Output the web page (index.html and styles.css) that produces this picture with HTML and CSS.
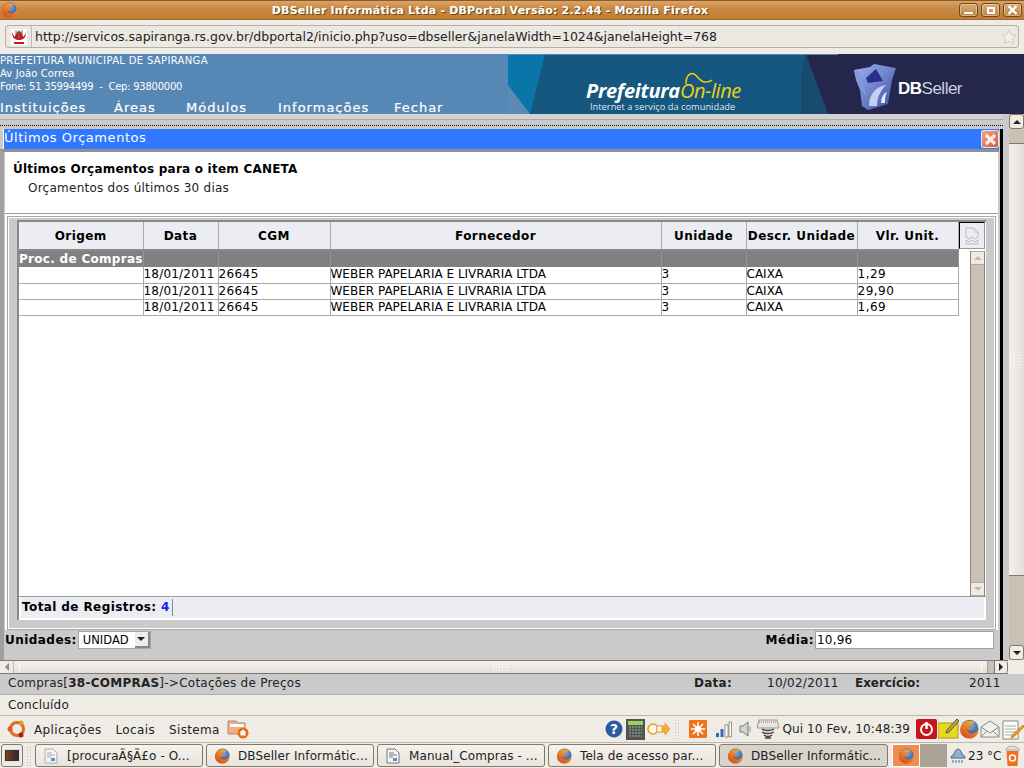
FILE: index.html
```html
<!DOCTYPE html>
<html lang="pt-BR">

<head>
    <meta charset="UTF-8">
    <title>DBSeller Informática Ltda - DBPortal Versão: 2.2.44 - Mozilla Firefox</title>
    <link rel="stylesheet" href="styles.css">
</head>

<body>
    <!-- firefox icon, used in several places -->
    <svg class="defs" width="0" height="0">
        <defs>
            <linearGradient id="fxg" x1="0.8" y1="0" x2="0.2" y2="1">
                <stop offset="0" stop-color="#f8b030"/>
                <stop offset="1" stop-color="#d8481c"/>
            </linearGradient>
            <radialGradient id="fxb" cx="0.6" cy="0.35" r="0.7">
                <stop offset="0" stop-color="#7aa4dc"/>
                <stop offset="1" stop-color="#1c3f80"/>
            </radialGradient>
            <symbol id="fx" viewBox="0 0 16 16">
                <circle cx="8.500" cy="7.500" r="7" fill="url(#fxb)"/>
                <path d="M13.500 3.500C11 1 6.500.5 3.500 3 .5 5.500 0 10 2.500 13c2.500 3 7.500 3.500 10.500 1 2-1.500 3-4 2.500-6.500-.5 2-2.500 4-5 4-3 0-4.500-2-4-3.500 1 1 3 1 3.500 0-1-.5-2-1-2-2 .5-1 2.500-1.500 3.500-2-1-.5.5-1 2-.5z" fill="url(#fxg)"/>
            </symbol>
        </defs>
    </svg>

    <div class="titlebar">
        <svg class="fx" width="16" height="16"><use href="#fx"/></svg>
        <div class="title-text">DBSeller Informática Ltda - DBPortal Versão: 2.2.44 - Mozilla Firefox</div>
        <div class="wm-btns">
            <div class="wm-btn"><i class="i-min"></i></div>
            <div class="wm-btn"><i class="i-max"></i></div>
            <div class="wm-btn">
                <svg width="11" height="10" viewBox="0 0 11 10"><path d="M1.500 1l8 8M9.500 1l-8 8" stroke="#fff" stroke-width="2.400"/></svg>
            </div>
        </div>
    </div>

    <div class="urlbar">
        <div class="urlbox">
            <div class="favicon">
                <svg width="16" height="16" viewBox="0 0 16 16"><rect width="16" height="16" fill="#fff"/><path d="M1 3c0 6 3 8 7 8s7-2 7-8c-1 3-2 4-3 5 0-3-2-5-4-6.500C6 3 4 5 4 8 3 7 2 6 1 3z" fill="#c8141c"/><path d="M3 13h10v2H3z" fill="#c8141c"/><path d="M8 2v8M5 1v5M11 1v5" stroke="#4a8a5a"/></svg>
            </div>
            <div class="url">http://servicos.sapiranga.rs.gov.br/dbportal2/inicio.php?uso=dbseller&amp;janelaWidth=1024&amp;janelaHeight=768</div>
            <svg class="star" width="16" height="16" viewBox="0 0 16 16"><path d="M8 1l2.200 4.600 5 .6-3.700 3.400 1 5L8 12.100l-4.500 2.500 1-5L.8 6.200l5-.6z" fill="#f2f0ec" stroke="#cfcbc4"/></svg>
        </div>
    </div>

    <div class="banner">
        <div class="inst">
            <div class="inst-lines">
                <div class="il1">PREFEITURA MUNICIPAL DE SAPIRANGA</div>
                <div>Av João Correa</div>
                <div class="il3">Fone: 51 35994499 &nbsp;-&nbsp; Cep: 93800000</div>
            </div>
            <div class="menu">
                <span class="m1">Instituições</span>
                <span class="m2">Áreas</span>
                <span class="m3">Módulos</span>
                <span class="m4">Informações</span>
                <span>Fechar</span>
            </div>
        </div>
        <div class="promo">
            <svg class="promo-bg" width="516" height="60" viewBox="0 0 516 60">
                <rect width="516" height="60" fill="#15577f"/>
                <path d="M0 0h37L22 60H0z" fill="#0a75a8"/>
                <path d="M0 31l22 29H0z" fill="#5b8ab4"/>
                <path d="M293 18l5-18 22 60h-27z" fill="#1b4a70"/>
                <path d="M298 0h218v60H320z" fill="#24264b"/>
                <path d="M0 0h330v1H0z" fill="#5787b4"/>
            </svg>
            <div class="pref"><b>Prefeitura</b><span>On-line</span></div>
            <svg class="pref-swoosh" width="32" height="14" viewBox="0 0 32 14"><path d="M2 12C2 4 6 0 10 2s6 8 11 8c3 0 6-1 7-2" fill="none" stroke="#f0d010" stroke-width="1.500"/></svg>
            <div class="pref-sub">Internet a serviço da comunidade</div>
            <svg class="db-logo" width="46" height="46" viewBox="0 0 46 46">
                <defs>
                    <linearGradient id="dbg" x1="0" y1="0" x2="1" y2="1">
                        <stop offset="0" stop-color="#a0b4ec"/>
                        <stop offset="1" stop-color="#3a50a8"/>
                    </linearGradient>
                </defs>
                <path d="M2 6l16-3 4-3 22 4-4 12-4 24-20 6-6-4-2-16-4-10z" fill="url(#dbg)"/>
                <path d="M14 14l10-9 7 12-15 2z" fill="#26308c"/>
                <path d="M17 42c0-11 6-19 17-21-6 6-9 13-9 21z" fill="#c4d0f0"/>
                <path d="M29 39c0-5 2-9 6-11-2 4-2 7-2 11z" fill="#e4eaf8"/>
                <path d="M2 6l7 4 5 22-6-8z" fill="#8098dc"/>
            </svg>
            <div class="db-text"><b>DB</b>Seller</div>
        </div>
    </div>

    <div class="viewport">
        <div class="viewport-main">
            <div class="desk">
                <div class="desk-strip"></div>
                <div class="window">
                    <div class="win-title">
                        <span>Últimos Orçamentos</span>
                        <div class="win-close">
                            <svg width="13" height="13" viewBox="0 0 13 13"><path d="M2 2l9 9M11 2l-9 9" stroke="#fff" stroke-width="3.200" opacity=".85"/></svg>
                        </div>
                    </div>
                    <div class="win-body">
                        <div class="head-box">
                            <div class="head-title">Últimos Orçamentos para o item CANETA</div>
                            <div class="head-sub">Orçamentos dos últimos 30 dias</div>
                        </div>
                        <div class="frame-wrap">
                            <div class="frame">
                                <div class="grid-box">
                                    <div class="grid-wrap">
                                        <div class="grid-left">
                                            <table class="grid">
                                                <colgroup>
                                                    <col class="c1"><col class="c2"><col class="c3"><col class="c4"><col class="c5"><col class="c6"><col class="c7">
                                                </colgroup>
                                                <tr class="hd">
                                                    <th>Origem</th><th>Data</th><th>CGM</th><th>Fornecedor</th><th>Unidade</th><th>Descr. Unidade</th><th>Vlr. Unit.</th>
                                                </tr>
                                                <tr class="grp">
                                                    <td>Proc. de Compras</td><td></td><td></td><td></td><td></td><td></td><td></td>
                                                </tr>
                                                <tr>
                                                    <td></td><td>18/01/2011</td><td>26645</td><td>WEBER PAPELARIA E LIVRARIA LTDA</td><td>3</td><td>CAIXA</td><td>1,29</td>
                                                </tr>
                                                <tr>
                                                    <td></td><td>18/01/2011</td><td>26645</td><td>WEBER PAPELARIA E LIVRARIA LTDA</td><td>3</td><td>CAIXA</td><td>29,90</td>
                                                </tr>
                                                <tr>
                                                    <td></td><td>18/01/2011</td><td>26645</td><td>WEBER PAPELARIA E LIVRARIA LTDA</td><td>3</td><td>CAIXA</td><td>1,69</td>
                                                </tr>
                                            </table>
                                        </div>
                                        <div class="grid-right">
                                            <div class="print-btn">
                                                <svg width="16" height="18" viewBox="0 0 16 18"><path d="M2 1h8l4 4v5l-3 2-3-2-3 2-3-2z" fill="none" stroke="#bbb"/><path d="M2 13l3 2 3-2 3 2 3-2v4H2z" fill="none" stroke="#bbb"/><path d="M10 1v4h4" fill="none" stroke="#ccc"/></svg>
                                            </div>
                                            <div class="grid-scroll">
                                                <div class="sb-btn sb-up"><i class="arr-up light"></i></div>
                                                <div class="sb-track"></div>
                                                <div class="sb-btn sb-down"><i class="arr-dn light"></i></div>
                                            </div>
                                        </div>
                                    </div>
                                    <div class="total">Total de Registros: <span class="num">4</span><span class="total-sep"></span></div>
                                </div>
                            </div>
                        </div>
                        <div class="bottom-row">
                            <div class="unid">
                                <label>Unidades:</label>
                                <div class="select"><span>UNIDAD</span><div class="select-btn"><i class="arr-dn"></i></div></div>
                            </div>
                            <div class="media">
                                <label>Média:</label>
                                <div class="media-input">10,96</div>
                            </div>
                        </div>
                    </div>
                </div>
            </div>
            <div class="hscroll">
                <div class="hs-btn"><i class="arr-l"></i></div>
                <div class="hs-track"><div class="hs-thumb"><div class="grip"></div></div></div>
                <div class="hs-end"></div>
                <div class="hs-btn"><i class="arr-r"></i></div>
            </div>
        </div>
        <div class="vscroll">
            <div class="vs-btn"><i class="arr-up"></i></div>
            <div class="vs-space"></div>
            <div class="vs-thumb"><div class="grip grip-v"></div></div>
            <div class="vs-fill"></div>
            <div class="vs-btn"><i class="arr-dn"></i></div>
        </div>
    </div>

    <div class="statusdb">
        <span class="st-left">Compras[<b>38-COMPRAS</b>]-&gt;Cotações de Preços</span>
        <b class="st-data">Data:</b>
        <span class="st-date">10/02/2011</span>
        <b class="st-ex">Exercício:</b>
        <span class="st-year">2011</span>
    </div>
    <div class="statusff">Concluído</div>

    <div class="panel-top">
        <svg width="20" height="20" viewBox="0 0 20 20" class="ubu"><circle cx="10" cy="10" r="6.500" fill="none" stroke="#dd6a20" stroke-width="3"/><circle cx="3" cy="10" r="2.500" fill="#e05a20"/><circle cx="14" cy="4" r="2.500" fill="#e89020"/><circle cx="14" cy="16" r="2.500" fill="#b02010"/></svg>
        <span class="pm">Aplicações</span>
        <span class="pm">Locais</span>
        <span class="pm pm-last">Sistema</span>
        <svg width="22" height="20" viewBox="0 0 22 20"><path d="M1 2h8l2 2h7v11H1z" fill="#eeb080" stroke="#a88"/><rect x="3" y="5" width="14" height="3" fill="#fff"/><circle cx="16" cy="14" r="5.500" fill="#ee6a10"/><path d="M16 10.500l3.500 3h-1v3h-5v-3h-1z" fill="#fff"/></svg>
        <div class="panel-fill"></div>
        <svg width="18" height="18" viewBox="0 0 18 18"><circle cx="9" cy="9" r="8.500" fill="#2a5a9c"/><text x="9" y="14" text-anchor="middle" class="qm">?</text></svg>
        <svg class="ic-calc" width="19" height="21" viewBox="0 0 19 21"><rect width="19" height="21" fill="#50554f"/><rect x="2" y="2" width="15" height="4" fill="#9cd060"/><path d="M3 8h13M3 11h13M3 14h13M3 17h13" stroke="#aaa" stroke-dasharray="2 1"/></svg>
        <svg class="ic-keys" width="24" height="16" viewBox="0 0 24 16"><circle cx="6" cy="8" r="5" fill="#fff6e0" stroke="#e89a30" stroke-width="1.500"/><circle cx="13" cy="8" r="3.500" fill="#fff6e0" stroke="#e89a30"/><path d="M15 5h3V2l5 6-5 6v-3h-3z" fill="#f4b030" stroke="#c87a10" stroke-width=".5"/></svg>
        <div class="dots dots-t"></div>
        <svg class="ic-star" width="18" height="18" viewBox="0 0 18 18"><rect width="18" height="18" rx="1" fill="#f0741c"/><path d="M9 2v14M2 9h14M4 4l10 10M14 4L4 14" stroke="#fff" stroke-width="1.500"/><circle cx="9" cy="9" r="3" fill="#fff"/></svg>
        <svg class="ic-net" width="17" height="17" viewBox="0 0 17 17"><path d="M1 12h3v4H1z" fill="#3a6aac"/><path d="M5.500 8h3v8h-3z" fill="#3a6aac"/><path d="M10 4h3v12h-3z" fill="#fff" stroke="#333" stroke-width=".5"/><path d="M14 1h2.500v15H14z" fill="#fff" stroke="#333" stroke-width=".5"/></svg>
        <svg class="ic-vol" width="13" height="16" viewBox="0 0 13 16"><path d="M1 5h3l5-4v14l-5-4H1z" fill="#d4d4d0" stroke="#777"/><path d="M11 5v6" stroke="#999"/></svg>
        <svg class="ic-spring" width="24" height="22" viewBox="0 0 24 22"><path d="M3 2h18l2 8H1z" fill="#e8e6e2" stroke="#999"/><path d="M3 4h18" stroke="#d06060" stroke-dasharray="1 1"/><path d="M6 11c3 2 9 2 12 0M6 14c3 2 9 2 12 0M8 17c2 2 6 2 8 0M9 20h6" fill="none" stroke="#444" stroke-width="1.500"/></svg>
        <span class="clock">Qui 10 Fev, 10:48:39</span>
        <svg class="ic-power" width="21" height="20" viewBox="0 0 21 20"><rect width="21" height="20" rx="2" fill="#c8141c"/><circle cx="10.500" cy="10.500" r="5.500" fill="none" stroke="#fff" stroke-width="2"/><path d="M10.500 3v7" stroke="#fff" stroke-width="2.500"/></svg>
        <svg class="ic-note" width="21" height="20" viewBox="0 0 21 20"><rect y="4" width="20" height="15" fill="#e8d820" stroke="#a89810"/><path d="M19 0L9 11l-1 3 3-1L21 2z" fill="#c8a050" stroke="#554"/></svg>
        <svg class="ic-fx2" width="20" height="20"><use href="#fx"/></svg>
        <svg class="ic-mail" width="20" height="18" viewBox="0 0 20 18"><path d="M1 7l9-6 9 6v10H1z" fill="#f0f0ec" stroke="#888"/><path d="M1 7l9 6 9-6M1 17l6-6M19 17l-6-6" fill="none" stroke="#888"/></svg>
        <svg class="ic-pad" width="22" height="21" viewBox="0 0 22 21"><rect x="1" y="2" width="15" height="18" fill="#fcfcf8" stroke="#888"/><path d="M3 7h11M3 10h11M3 13h11M3 16h8" stroke="#aaa"/><path d="M21 6L10 16l-1 3 3-1L22 8z" fill="#f0a020" stroke="#a05010" stroke-width=".5"/></svg>
    </div>

    <div class="panel-bot">
        <div class="show-desk"><i></i></div>
        <div class="dots dots-b"></div>
        <div class="tasks">
            <div class="task"><svg width="16" height="16" viewBox="0 0 16 16"><path d="M2 1h8l4 4v10H2z" fill="#f4f4f0" stroke="#aab"/><path d="M4 5h5M4 7h8M4 9h4" stroke="#aab"/><rect x="8" y="10" width="4" height="3" fill="#6a8ac4"/></svg><span>[procuraÃ§Ã£o - O...</span></div>
            <div class="task"><svg width="16" height="16"><use href="#fx"/></svg><span>DBSeller Informátic...</span></div>
            <div class="task"><svg width="16" height="16" viewBox="0 0 16 16"><path d="M2 1h8l4 4v10H2z" fill="#f4f4f0" stroke="#778"/><path d="M4 5h5M4 7h8M4 9h4" stroke="#778"/><rect x="8" y="10" width="4" height="3" fill="#6a8ac4"/></svg><span>Manual_Compras - ...</span></div>
            <div class="task"><svg width="16" height="16"><use href="#fx"/></svg><span>Tela de acesso par...</span></div>
            <div class="task active"><svg width="16" height="16"><use href="#fx"/></svg><span>DBSeller Informátic...</span></div>
        </div>
        <div class="pager">
            <div class="pager-a"><svg width="16" height="16"><use href="#fx"/></svg></div>
            <div class="pager-b"></div>
        </div>
        <svg class="ic-rain" width="16" height="17" viewBox="0 0 16 17"><path d="M1 11c0-3 2-3 3-3 0-3 2-6 4-6s4 3 4 6c1 0 3 0 3 3z" fill="#9ab0c8" stroke="#468"/><path d="M3 13v3M6 13v3M9 13v3M12 13v3" stroke="#2a70c0"/></svg>
        <span class="temp">23 °C</span>
        <svg class="ic-trash" width="17" height="22" viewBox="0 0 16 22"><path d="M2 6h12l-1 15H3z" fill="#f07020"/><path d="M1 5c2-5 12-5 14 0z" fill="#e4e2de" stroke="#aaa"/><circle cx="8" cy="13" r="3" fill="none" stroke="#fff" stroke-width="1.500"/></svg>
    </div>
</body>

</html>
```

FILE: styles.css
```css
* {
    margin: 0;
    padding: 0;
    box-sizing: border-box;
}

html,
body {
    width: 1024px;
    height: 768px;
    overflow: hidden;
}

body {
    font-family: "DejaVu Sans", sans-serif;
    font-size: 12px;
    color: #000;
    background-color: #efebe5;
    display: flex;
    flex-direction: column;
}

.defs {
    position: absolute;
}

/* firefox window */
.titlebar {
    height: 20px;
    flex: none;
    display: flex;
    align-items: center;
    padding: 0 2px 0 1px;
    background: linear-gradient(#dca468, #c98a44 40%, #bf7c34);
    border-top: 1px solid #8a5a28;
    border-bottom: 1px solid #a06a30;
}

.fx {
    flex: none;
}

.title-text {
    flex: 1;
    text-align: center;
    color: #fff;
    font-weight: bold;
    font-size: 11px;
    letter-spacing: 0.18px;
    padding-left: 4px;
    text-shadow: 1px 1px 0 #6b4a20;
}

.wm-btns {
    display: flex;
    gap: 3px;
}

.wm-btn {
    width: 19px;
    height: 14px;
    border: 1px solid #6b4a22;
    border-radius: 3px;
    background: linear-gradient(#dba873, #c08440);
    box-shadow: inset 0 0 0 1px rgba(255, 255, 255, 0.35);
    display: flex;
    align-items: center;
    justify-content: center;
}

.i-min {
    width: 9px;
    height: 2px;
    margin-top: 6px;
    background-color: #fff;
}

.i-max {
    width: 8px;
    height: 7px;
    border: 2px solid #fff;
}

.urlbar {
    height: 34px;
    flex: none;
    padding: 5px 5px 0 5px;
    background-color: #efebe5;
}

.urlbox {
    height: 23px;
    border: 1px solid #b8afa2;
    border-radius: 3px;
    background-color: #ece9e3;
    display: flex;
    align-items: center;
    padding-right: 1px;
}

.favicon {
    width: 26px;
    height: 100%;
    flex: none;
    border-right: 1px solid #c4bdb2;
    display: flex;
    align-items: center;
    justify-content: center;
}

.url {
    flex: 1;
    padding-left: 3px;
    font-size: 12.5px;
    color: #222;
    white-space: nowrap;
}

.star {
    flex: none;
}

/* banner */
.banner {
    height: 60px;
    flex: none;
    display: flex;
    background-color: #5787b4;
    color: #fff;
}

.inst {
    width: 508px;
    flex: none;
}

.inst-lines {
    font-size: 10px;
    line-height: 13px;
    height: 41px;
    letter-spacing: 0.1px;
    white-space: nowrap;
}

.il1 {
    letter-spacing: 0.34px;
}

.il3 {
    letter-spacing: -0.24px;
}

.menu {
    display: flex;
    font-size: 13px;
    letter-spacing: 1px;
    white-space: nowrap;
    line-height: 13px;
    padding-top: 6px;
    -webkit-text-stroke: 0.2px #fff;
}

.m1 {
    width: 114px;
}

.m2 {
    width: 72px;
}

.m3 {
    width: 92px;
}

.m4 {
    width: 116px;
}

.promo {
    position: relative;
    width: 516px;
    flex: none;
    overflow: hidden;
}

.promo-bg {
    display: block;
}

.pref {
    position: absolute;
    left: 78px;
    top: 27px;
    font-family: "Open Sans", sans-serif;
    font-size: 20px;
    line-height: 20px;
    font-style: italic;
    white-space: nowrap;
    letter-spacing: -0.3px;
}

.pref b {
    color: #fff;
}

.pref span {
    color: #f0d010;
    font-weight: 400;
    letter-spacing: -0.4px;
}

.pref-swoosh {
    position: absolute;
    left: 176px;
    top: 18px;
}

.pref-sub {
    position: absolute;
    left: 82px;
    top: 47px;
    font-family: "Open Sans", sans-serif;
    font-size: 9.3px;
    line-height: 12px;
    color: #dde6ee;
    white-space: nowrap;
}

.db-logo {
    position: absolute;
    left: 344px;
    top: 10px;
}

.db-text {
    position: absolute;
    left: 390px;
    top: 25px;
    font-family: "Liberation Sans", sans-serif;
    font-size: 17px;
    line-height: 20px;
    color: #c9d2e0;
    letter-spacing: -0.5px;
}

.db-text b {
    color: #fff;
}

/* page viewport */
.viewport {
    height: 560px;
    flex: none;
    display: flex;
    align-items: flex-start;
}

.viewport-main {
    width: 1009px;
    flex: none;
    display: flex;
    flex-direction: column;
}

.desk {
    height: 546px;
    flex: none;
    background-color: #cacaca;
    display: flex;
    flex-direction: column;
}

.desk-strip {
    height: 12px;
    flex: none;
    margin-right: 6px;
    border-bottom: 1px dotted #000;
    background: linear-gradient(#d2d2d2 0, #d2d2d2 5px, #a8a8a8 5px, #a8a8a8 6px, #cacaca 6px);
}

.window {
    flex: 1;
    display: flex;
    flex-direction: column;
    margin: 3px 6px 0 0;
    padding-right: 1px;
    border-right: 3px solid #000;
}

.win-title {
    height: 20px;
    flex: none;
    margin-left: 3px;
    background-color: #2f78ff;
    color: #fff;
    font-size: 13px;
    line-height: 18px;
    letter-spacing: 0.55px;
    display: flex;
    justify-content: space-between;
    border-left: 1px solid #fff;
}

.win-close {
    width: 18px;
    height: 18px;
    margin-top: 1px;
    border: 1px solid #dfe8f4;
    border-radius: 2px;
    background: linear-gradient(135deg, #f0a888, #d05c3c);
    display: flex;
    align-items: center;
    justify-content: center;
}

.win-body {
    flex: 1;
    display: flex;
    flex-direction: column;
    border-top: 3px solid #909090;
    border-left: 4px solid #a0a0a0;
}

.head-box {
    height: 62px;
    flex: none;
    background-color: #fff;
    padding: 9px 0 0 8px;
    margin: 0 1px;
    border-bottom: 1px solid #999;
}

.head-title {
    font-weight: bold;
    font-size: 12px;
    line-height: 16px;
    letter-spacing: 0.22px;
}

.head-sub {
    font-size: 12px;
    line-height: 19px;
    margin-top: 2px;
    padding-left: 15px;
    color: #222;
    letter-spacing: 0.25px;
}

.frame-wrap {
    height: 416px;
    flex: none;
    margin: 0 1px;
    padding: 2px 2px 0;
    background-color: #fff;
}

.frame {
    height: 414px;
    border: 1px solid #a8a8a8;
    background-color: #cacaca;
    padding: 3px 9px 9px;
    box-shadow: inset 0 0 0 1px #fff;
}

.grid-box {
    height: 400px;
    display: flex;
    flex-direction: column;
    background-color: #fff;
    border-top: 2px solid #8a8a8a;
    border-left: 2px solid #8a8a8a;
}

.grid-wrap {
    flex: 1;
    display: flex;
    min-height: 0;
    border-bottom: 1px solid #999;
    margin-left: 0;
}

.grid-left {
    width: 939px;
    flex: none;
}

.grid {
    width: 939px;
    table-layout: fixed;
    border-collapse: collapse;
    font-size: 12px;
}

.c1 { width: 124px; }
.c2 { width: 75px; }
.c3 { width: 112px; }
.c4 { width: 331px; }
.c5 { width: 85px; }
.c6 { width: 111px; }
.c7 { width: 101px; }

.grid th,
.grid td {
    border-right: 1px solid #aaa;
    white-space: nowrap;
    overflow: hidden;
}

.grid td {
    height: 16px;
    padding: 0;
    line-height: 15px;
    border-bottom: 1px solid #aaa;
}

.grid td:nth-child(2) {
    letter-spacing: 0.2px;
}

.grid td:nth-child(3) {
    letter-spacing: 0.4px;
}

.grid td:nth-child(7) {
    letter-spacing: 0.5px;
}

.hd th {
    height: 28px;
    padding-top: 1px;
    background-color: #ebedf2;
    border-bottom: 2px solid #8a8a8a;
    letter-spacing: 0.45px;
}

.grp td {
    height: 17px;
    background-color: #808080;
    color: #fff;
    font-weight: bold;
    border-bottom: 0;
    letter-spacing: 0.3px;
    border-right-color: #969696;
}

.grid-right {
    flex: 1;
    display: flex;
    flex-direction: column;
    min-width: 0;
}

.print-btn {
    width: 26px;
    height: 27px;
    flex: none;
    margin-left: 1px;
    background-color: #ebedf2;
    border: 1px solid #000;
    border-right-color: #999;
    border-bottom-color: #999;
    display: flex;
    align-items: center;
    justify-content: center;
}

.grid-scroll {
    flex: 1;
    width: 15px;
    margin: 2px 0 0 12px;
    display: flex;
    flex-direction: column;
    background-color: #c9c1b6;
    border-left: 1px solid #8f8474;
    border-right: 1px solid #8f8474;
}

.sb-btn {
    height: 14px;
    flex: none;
    background-color: #efebe5;
    border-top: 1px solid #b5aa9c;
    border-bottom: 1px solid #b5aa9c;
    display: flex;
    align-items: center;
    justify-content: center;
}

.sb-track {
    flex: 1;
}

.arr-up,
.arr-dn,
.arr-l,
.arr-r {
    display: block;
    width: 0;
    height: 0;
    border-style: solid;
    border-color: transparent;
}

.arr-up {
    border-width: 0 4px 4px;
    border-bottom-color: #222;
}

.arr-dn {
    border-width: 4px 4px 0;
    border-top-color: #222;
}

.arr-l {
    border-width: 4px 4px 4px 0;
    border-right-color: #888;
}

.arr-r {
    border-width: 4px 0 4px 4px;
    border-left-color: #222;
}

.arr-up.light {
    border-bottom-color: #bbb;
}

.arr-dn.light {
    border-top-color: #bbb;
}

.total {
    height: 21px;
    flex: none;
    margin: 0 2px 2px;
    background-color: #ebedf2;
    font-weight: bold;
    font-size: 12px;
    line-height: 21px;
    padding-left: 1px;
    letter-spacing: 0.4px;
    display: flex;
    white-space: pre;
}

.num {
    color: #1a1aee;
}

.total-sep {
    width: 1px;
    height: 17px;
    margin: 2px 0 0 2px;
    background-color: #888;
}

.bottom-row {
    flex: 1;
    display: flex;
    justify-content: space-between;
    align-items: flex-start;
    padding: 1px 5px 0 1px;
}

.bottom-row label {
    font-weight: bold;
    font-size: 12px;
    letter-spacing: 0.45px;
}

.unid,
.media {
    display: flex;
    align-items: center;
}

.select {
    width: 73px;
    height: 18px;
    margin-left: 1px;
    background-color: #fff;
    border: 1px solid #a8a8a8;
    font-size: 11.5px;
    line-height: 16px;
    padding-left: 4px;
    display: flex;
    justify-content: space-between;
}

.select-btn {
    width: 15px;
    flex: none;
    background-color: #efebe5;
    border-right: 2px solid #888;
    border-bottom: 2px solid #888;
    display: flex;
    align-items: center;
    justify-content: center;
}

.media-input {
    width: 179px;
    height: 18px;
    margin-left: 1px;
    background-color: #fff;
    border: 1px solid #a0a0a0;
    font-size: 12px;
    line-height: 16px;
    padding-left: 1px;
    letter-spacing: 0.2px;
}

/* browser scrollbars */
.hscroll {
    height: 14px;
    flex: none;
    display: flex;
    margin-right: 1px;
    background: linear-gradient(#f4f1ec, #e4dfd8);
    border-top: 1px solid #85786a;
    border-bottom: 1px solid #85786a;
}

.hs-btn {
    width: 14px;
    flex: none;
    background-color: #efebe5;
    border-right: 1px solid #c4bbaf;
    display: flex;
    align-items: center;
    justify-content: center;
}

.hs-btn:last-child {
    border-left: 1px solid #85786a;
    border-right: 1px solid #85786a;
    border-radius: 0 3px 3px 0;
}

.hs-track {
    flex: 1;
    display: flex;
    padding: 0 5px;
}

.hs-thumb {
    flex: 1;
    display: flex;
    justify-content: center;
    align-items: center;
    border-left: 1px solid #fbfaf8;
    border-right: 1px solid #fbfaf8;
}

.hs-end {
    width: 7px;
    flex: none;
    background-color: #c9c1b6;
    border-left: 1px solid #a89e90;
}

.grip {
    width: 18px;
    height: 8px;
    background-image: radial-gradient(#fff 0.8px, transparent 1px);
    background-size: 3px 3px;
}

.grip-v {
    width: 8px;
    height: 18px;
}

.vscroll {
    width: 15px;
    height: 546px;
    flex: none;
    display: flex;
    flex-direction: column;
    background-color: #c9c1b6;
}

.vs-btn {
    height: 15px;
    flex: none;
    background-color: #efebe5;
    border: 1px solid #85786a;
    border-radius: 3px;
    display: flex;
    align-items: center;
    justify-content: center;
}

.vs-space {
    height: 14px;
    flex: none;
}

.vs-thumb {
    height: 433px;
    flex: none;
    background: linear-gradient(90deg, #f4f1ec, #e4dfd8);
    border-top: 1px solid #85786a;
    border-bottom: 1px solid #85786a;
    display: flex;
    align-items: center;
    justify-content: center;
}

.vs-fill {
    flex: 1;
}

/* status lines */
.statusdb {
    height: 21px;
    flex: none;
    background-color: #cacaca;
    border-bottom: 1px solid #aeaeae;
    display: flex;
    font-size: 12px;
    line-height: 18px;
    padding-left: 8px;
    color: #222;
    letter-spacing: 0.25px;
    white-space: nowrap;
}

.st-left {
    width: 686px;
    flex: none;
}

.st-data {
    width: 73px;
    flex: none;
}

.st-date {
    width: 88px;
    flex: none;
}

.st-ex {
    width: 114px;
    flex: none;
    letter-spacing: -0.05px;
}

.statusff {
    height: 21px;
    flex: none;
    border-bottom: 1px solid #bdb6aa;
    padding-left: 8px;
    font-size: 12px;
    line-height: 20px;
    color: #222;
    letter-spacing: 0.2px;
}

/* gnome panels */
.panel-top {
    height: 27px;
    flex: none;
    display: flex;
    align-items: center;
    border-bottom: 1px solid #bdb6aa;
    padding-left: 7px;
    white-space: nowrap;
}

.ubu {
    margin-right: 7px;
}

.pm {
    font-size: 12px;
    line-height: 16px;
    padding-top: 1px;
    color: #222;
    margin-right: 14px;
    letter-spacing: 0.35px;
}

.pm-last {
    margin-right: 7px;
}

.panel-fill {
    flex: 1;
}

.qm {
    font-family: "DejaVu Sans", sans-serif;
    font-weight: bold;
    font-size: 14px;
    fill: #fff;
}

.ic-calc {
    margin-left: 3px;
}

.ic-keys {
    margin-left: 2px;
}

.dots {
    width: 6px;
    height: 20px;
    flex: none;
    background-image: radial-gradient(#bbb 0.7px, transparent 1px);
    background-size: 3px 3px;
}

.dots-t {
    margin: 0 9px 0 3px;
}

.ic-star {
    margin-right: 8px;
}

.ic-net {
    margin-right: 7px;
}

.ic-vol {
    margin-right: 4px;
}

.clock {
    font-size: 12px;
    color: #222;
    margin: 0 6px 0 2px;
    letter-spacing: 0.1px;
}

.ic-note {
    margin-left: 1px;
}

.ic-mail {
    margin-left: 1px;
}

.ic-pad {
    margin-left: 2px;
}

.panel-bot {
    height: 25px;
    flex: none;
    display: flex;
    align-items: center;
    padding-left: 1px;
    white-space: nowrap;
}

.show-desk {
    width: 22px;
    height: 23px;
    flex: none;
    border: 1px solid #85786a;
    border-radius: 3px;
    display: flex;
    align-items: center;
    justify-content: center;
}

.show-desk i {
    display: block;
    width: 14px;
    height: 11px;
    background: linear-gradient(90deg, #7a4020, #2a2a2a);
    border: 1px solid #333;
    box-shadow: 0 0 0 1px #ddd;
}

.dots-b {
    margin: 0 3px;
}

.tasks {
    display: flex;
    gap: 3px;
}

.task {
    width: 168px;
    height: 23px;
    border: 1px solid #85786a;
    border-radius: 3px;
    display: flex;
    align-items: center;
    font-size: 12px;
    color: #222;
    padding-left: 7px;
    letter-spacing: 0.1px;
    overflow: hidden;
    background: linear-gradient(#f6f3ee, #e8e4dd);
}

.task span {
    margin-left: 8px;
}

.task.active {
    width: 169px;
    background: #d8d3cb;
}

.pager {
    display: flex;
    height: 23px;
    margin-left: 4px;
    flex: none;
}

.pager-a {
    width: 28px;
    height: 100%;
    background-color: #f08c50;
    border: 1px solid #fff;
    display: flex;
    align-items: center;
    justify-content: center;
}

.pager-b {
    width: 27px;
    background-color: #aba294;
}

.ic-rain {
    margin-left: 3px;
}

.temp {
    font-size: 12px;
    color: #222;
    margin: 0 3px 0 2px;
}
```
